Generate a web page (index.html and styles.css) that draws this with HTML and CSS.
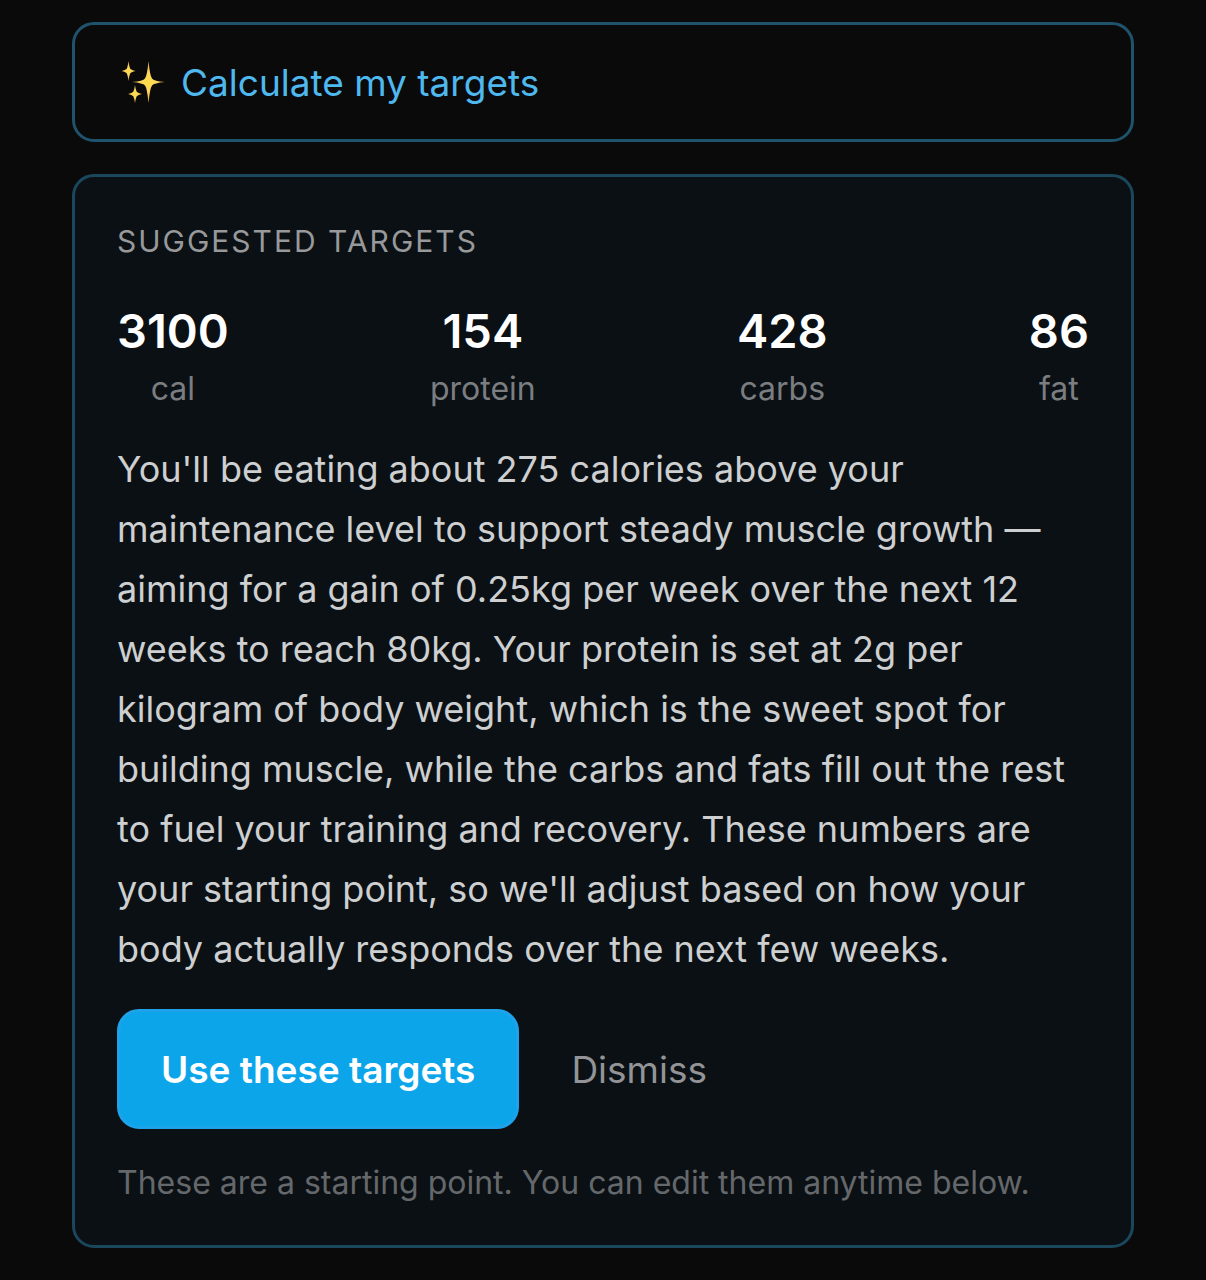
FILE: index.html
```html
<!DOCTYPE html>
<html lang="en">
<head>
<meta charset="utf-8">
<meta name="viewport" content="width=device-width, initial-scale=1">
<title>Targets</title>
<link rel="stylesheet" href="styles.css">
</head>
<body>
<main class="page">
  <button type="button" class="calculate">
    <svg class="sparkles" viewBox="0 0 44 44" aria-hidden="true">
      <defs>
        <radialGradient id="gold">
          <stop offset="0" stop-color="#ffdc48"/>
          <stop offset=".45" stop-color="#fcd65c"/>
          <stop offset="1" stop-color="#d9a04a"/>
        </radialGradient>
      </defs>
      <g fill="url(#gold)">
        <path d="M27.5 1Q29 16 31 18.500Q33 21 44 22Q33 23 31 25.500Q29 28 27.500 43Q26 28 24 25.500Q22 23 11 22Q22 21 24 18.500Q26 16 27.500 1Z"/>
        <path d="M7.500 1Q8.500 8 9.500 9Q10.500 10 14.500 11Q10.500 12 9.500 13Q8.500 14 7.500 21Q6.500 14 5.500 13Q4.500 12 .5 11Q4.500 10 5.500 9Q6.500 8 7.500 1Z"/>
        <path d="M14 25Q15 31 16 32Q17 33 21 34Q17 35 16 36Q15 37 14 43Q13 37 12 36Q11 35 7 34Q11 33 12 32Q13 31 14 25Z"/>
      </g>
    </svg>
    <span>Calculate my targets</span>
  </button>

  <section class="card" aria-labelledby="suggested">
    <h2 class="card-title" id="suggested">Suggested targets</h2>
    <dl class="stats">
      <div class="stat"><dt>cal</dt><dd>3100</dd></div>
      <div class="stat"><dt>protein</dt><dd>154</dd></div>
      <div class="stat"><dt>carbs</dt><dd>428</dd></div>
      <div class="stat"><dt>fat</dt><dd>86</dd></div>
    </dl>
    <p class="summary">You'll be eating about 275 calories above your maintenance level to support steady muscle growth — aiming for a gain of 0.25kg per week over the next 12 weeks to reach 80kg. Your protein is set at 2g per kilogram of body weight, which is the sweet spot for building muscle, while the carbs and fats fill out the rest to fuel your training and recovery. These numbers are your starting point, so we'll adjust based on how your body actually responds over the next few weeks.</p>
    <div class="actions">
      <button type="button" class="primary">Use these targets</button>
      <button type="button" class="dismiss">Dismiss</button>
    </div>
    <p class="note">These are a starting point. You can edit them anytime below.</p>
  </section>
</main>
</body>
</html>
```
FILE: styles.css
```css
* {
  box-sizing: border-box;
}

body {
  margin: 0;
  background: #0a0a0a;
  color: #fff;
  font-family: Inter, "Liberation Sans", sans-serif;
  font-size: 36px;
}

h2, p, dl, dd {
  margin: 0;
}

button {
  font: inherit;
  font-size: 37px;
  cursor: pointer;
}

.page {
  display: flex;
  flex-direction: column;
  gap: 32px;
  padding: 22px 72px 32px;
}

.calculate {
  display: flex;
  align-items: center;
  gap: 16px;
  height: 120px;
  padding: 0 46px;
  background: transparent;
  border: 3px solid #1f526b;
  border-radius: 22px;
  color: #4fb8ee;
}

.sparkles {
  width: 44px;
  height: 44px;
}

.card {
  padding: 42px;
  background: #0b1014;
  border: 3px solid #1b475c;
  border-radius: 22px;
}

.card-title {
  margin-bottom: 38px;
  color: #98999b;
  font-size: 30px;
  font-weight: 400;
  line-height: 44px;
  letter-spacing: 2px;
  text-transform: uppercase;
}

.stats {
  display: flex;
  justify-content: space-between;
  margin-bottom: 30px;
}

.stat {
  display: flex;
  flex-direction: column-reverse;
  align-items: center;
  gap: 8px;
}

.stat dt {
  color: #7b7e81;
  font-size: 32px;
  line-height: 40px;
}

.stat dd {
  font-size: 47px;
  font-weight: 600;
  line-height: 60px;
}

.summary {
  margin-bottom: 30px;
  color: #cdcfd0;
  line-height: 60px;
}

.actions {
  display: flex;
  align-items: center;
  gap: 10px;
  margin-bottom: 34px;
}

.primary {
  height: 120px;
  padding: 0 41px;
  background: #0da5ea;
  border: 3px solid #1ea3ea;
  border-radius: 22px;
  color: #fff;
  font-weight: 600;
}

.dismiss {
  height: 120px;
  padding: 0 42px;
  background: transparent;
  border: 0;
  color: #929497;
}

.note {
  color: #65686b;
  font-size: 32px;
  line-height: 40px;
}
```
